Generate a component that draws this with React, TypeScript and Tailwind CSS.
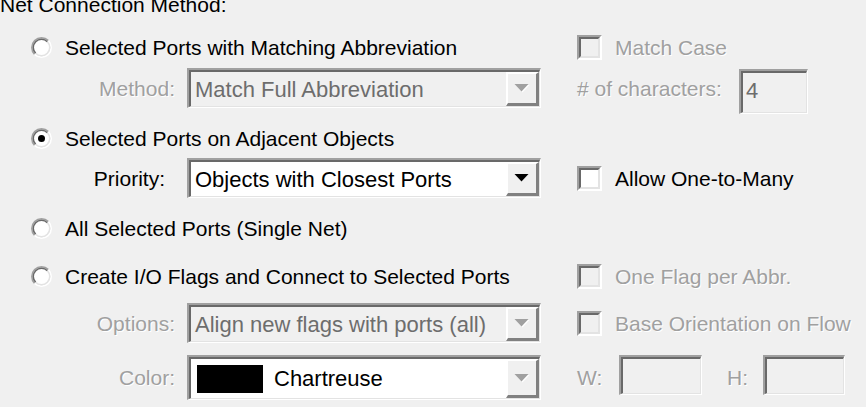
import type { ReactNode } from "react";

const dimText = "text-[#a0a0a0] [text-shadow:1px_1px_0_#ffffff]";

function Radio({ checked }: { checked?: boolean }) {
  // classic 3D radio button, light from the top left
  const c = 10.5;
  const arc = (r: number, upper: boolean) => {
    const d = r * 0.7071;
    const a = `${c - d} ${c + d}`;
    const b = `${c + d} ${c - d}`;
    return upper
      ? `M ${a} A ${r} ${r} 0 0 1 ${b}`
      : `M ${b} A ${r} ${r} 0 0 1 ${a}`;
  };
  return (
    <svg width="21" height="21" viewBox="0 0 21 21" className="shrink-0">
      <circle cx={c} cy={c} r="8" fill="#ffffff" />
      <path d={arc(9.75, true)} stroke="#a0a0a0" strokeWidth="1.5" fill="none" />
      <path d={arc(9.75, false)} stroke="#ffffff" strokeWidth="1.5" fill="none" />
      <path d={arc(8.25, true)} stroke="#696969" strokeWidth="1.5" fill="none" />
      <path d={arc(8.25, false)} stroke="#e3e3e3" strokeWidth="1.5" fill="none" />
      {checked && <circle cx={c} cy={c} r="3.5" fill="#000000" />}
    </svg>
  );
}

function Check({ disabled }: { disabled?: boolean }) {
  return (
    <div className="w-[25px] h-[25px] shrink-0 border-2 border-t-[#a0a0a0] border-l-[#a0a0a0] border-b-white border-r-white">
      <div
        className={`w-full h-full border-2 border-t-[#696969] border-l-[#696969] border-b-[#e3e3e3] border-r-[#e3e3e3] ${
          disabled ? "bg-[#f0f0f0]" : "bg-white"
        }`}
      />
    </div>
  );
}

function Sunken({
  className,
  inner,
  children,
}: {
  className: string;
  inner: string;
  children?: ReactNode;
}) {
  return (
    <div
      className={`border-t-2 border-l-2 border-b-[1.5px] border-r-[1.5px] border-t-[#a0a0a0] border-l-[#a0a0a0] border-b-white border-r-white ${className}`}
    >
      <div
        className={`w-full h-full border-t-2 border-l-2 border-b-[1px] border-r-[1px] border-t-[#696969] border-l-[#696969] border-b-[#e3e3e3] border-r-[#e3e3e3] ${inner}`}
      >
        {children}
      </div>
    </div>
  );
}

function Arrow({ dim }: { dim?: boolean }) {
  return (
    <div className="w-[33px] h-full shrink-0 bg-[#f0f0f0] border-t-2 border-l-2 border-b-[3px] border-r-[3px] border-t-white border-l-white border-b-[#808080] border-r-[#808080] flex items-center justify-center">
      <svg width="16" height="9" viewBox="0 0 16 9">
        {dim && <polygon points="1.5,1 15.5,1 8.5,8.5" fill="#ffffff" />}
        <polygon points="0.5,0 14.5,0 7.5,7.5" fill={dim ? "#a0a0a0" : "#000000"} />
      </svg>
    </div>
  );
}

function Combo({
  text,
  disabled,
  white,
  swatch,
  tall,
}: {
  text: string;
  disabled?: boolean;
  white?: boolean;
  swatch?: boolean;
  tall?: boolean;
}) {
  return (
    <Sunken
      className={`ml-[12px] w-[354px] ${tall ? "h-[45px]" : "h-[40px]"}`}
      inner={`flex items-stretch ${white ? "bg-white" : "bg-[#f0f0f0]"}`}
    >
      <div className="flex-1 flex items-center pl-[4px] min-w-0 text-[22px]">
        {swatch && <div className="w-[66px] h-[28px] bg-black ml-[2px] mr-[11px] shrink-0" />}
        <span className={`whitespace-nowrap ${disabled ? "text-[#6d6d6d]" : "text-black"}`}>
          {text}
        </span>
      </div>
      <Arrow dim={disabled || swatch} />
    </Sunken>
  );
}

function FieldLabel({ children, dim, pad }: { children: ReactNode; dim?: boolean; pad?: string }) {
  return (
    <div className={`w-[175px] text-right shrink-0 whitespace-nowrap ${dim ? dimText : "text-black"} ${pad ?? ""}`}>
      {children}
    </div>
  );
}

function RadioRow({ checked, label }: { checked?: boolean; label: string }) {
  return (
    <div className="w-[577px] shrink-0 flex items-center pl-[31px] gap-[13px]">
      <Radio checked={checked} />
      <span className="whitespace-nowrap text-black">{label}</span>
    </div>
  );
}

function CheckItem({ label, disabled }: { label: string; disabled?: boolean }) {
  return (
    <div className="flex items-center gap-[13px]">
      <Check disabled={disabled} />
      <span className={`whitespace-nowrap ${disabled ? dimText : "text-black"}`}>{label}</span>
    </div>
  );
}

export default function App() {
  return (
    <div className="w-[866px] h-[407px] overflow-hidden bg-[#f0f0f0] font-['Liberation_Sans',Arial,sans-serif] text-[21px] leading-[21px] flex flex-col">
      <div className="h-[9px] flex items-center">
        <span className="whitespace-nowrap text-black">Net Connection Method:</span>
      </div>

      <div className="mt-[26px] h-[25px] flex items-center">
        <RadioRow label="Selected Ports with Matching Abbreviation" />
        <CheckItem label="Match Case" disabled />
      </div>

      <div className="mt-[8px] h-[40px] flex items-center">
        <div className="w-[577px] shrink-0 flex items-center">
          <FieldLabel dim>Method:</FieldLabel>
          <Combo text="Match Full Abbreviation" disabled />
        </div>
        <span className={`w-[162px] shrink-0 whitespace-nowrap ${dimText}`}># of characters:</span>
        <Sunken className="w-[69px] h-[45px] self-start mt-[1px]" inner="bg-[#f0f0f0] flex items-center pl-[3px] pb-[4px] text-[22px]">
          <span className="text-[#6d6d6d]">4</span>
        </Sunken>
      </div>

      <div className="mt-[18px] h-[25px] flex items-center">
        <RadioRow checked label="Selected Ports on Adjacent Objects" />
      </div>

      <div className="mt-[7px] h-[40px] flex items-center">
        <div className="w-[577px] shrink-0 flex items-center">
          <FieldLabel pad="pr-[10px]">Priority:</FieldLabel>
          <Combo text="Objects with Closest Ports" white />
        </div>
        <CheckItem label="Allow One-to-Many" />
      </div>

      <div className="mt-[18px] h-[25px] flex items-center">
        <RadioRow label="All Selected Ports (Single Net)" />
      </div>

      <div className="mt-[23px] h-[25px] flex items-center">
        <RadioRow label="Create I/O Flags and Connect to Selected Ports" />
        <CheckItem label="One Flag per Abbr." disabled />
      </div>

      <div className="mt-[14px] h-[40px] flex items-center">
        <div className="w-[577px] shrink-0 flex items-center">
          <FieldLabel dim>Options:</FieldLabel>
          <Combo text="Align new flags with ports (all)" disabled />
        </div>
        <CheckItem label="Base Orientation on Flow" disabled />
      </div>

      <div className="mt-[12px] h-[45px] flex items-center">
        <div className="w-[577px] shrink-0 flex items-center">
          <FieldLabel dim>Color:</FieldLabel>
          <Combo text="Chartreuse" white swatch tall />
        </div>
        <span className={`w-[42px] shrink-0 ${dimText}`}>W:</span>
        <Sunken className="w-[83px] h-[40px] self-start" inner="bg-[#f0f0f0]" />
        <span className={`ml-[25px] w-[36px] shrink-0 ${dimText}`}>H:</span>
        <Sunken className="w-[82px] h-[40px] self-start" inner="bg-[#f0f0f0]" />
      </div>
    </div>
  );
}
